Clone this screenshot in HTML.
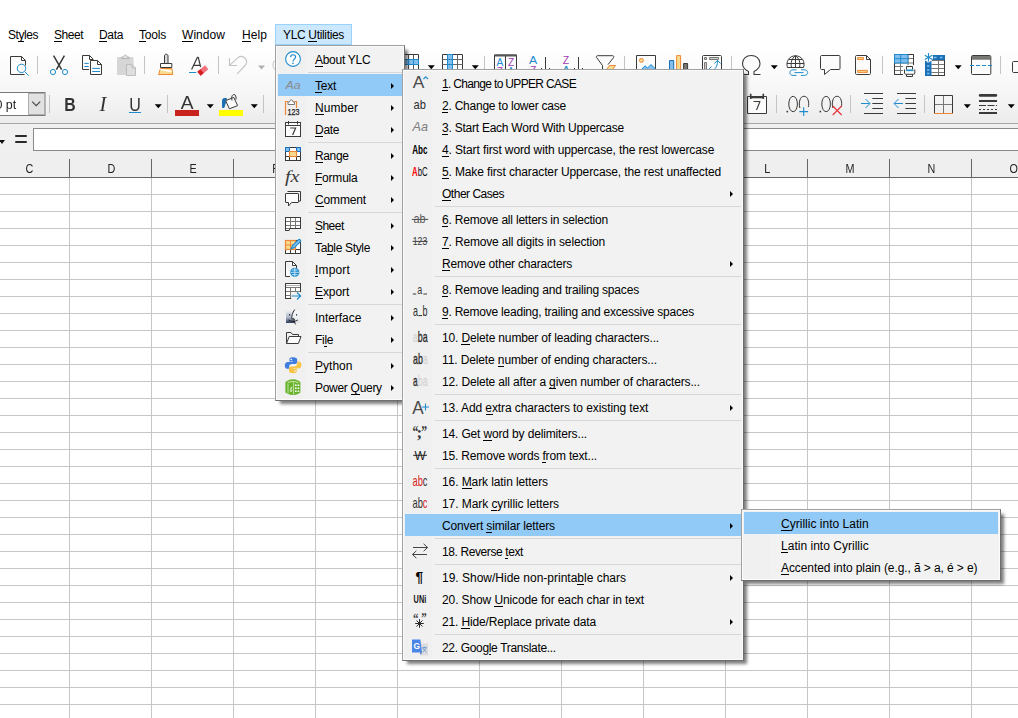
<!DOCTYPE html>
<html lang="en"><head><meta charset="utf-8"><title>YLC Utilities - Text menu</title>
<style>
*{box-sizing:border-box;margin:0;padding:0}
html,body{width:1018px;height:718px;overflow:hidden;background:#fff}
body{font-family:"Liberation Sans",sans-serif;font-size:12px;color:#000;line-height:1}
#app{position:relative;width:1018px;height:718px;overflow:hidden;background:#fff}
.abs{position:absolute}
.ul{position:absolute;height:1px;background:#000}
.mb{position:absolute;top:27px;height:16px;line-height:16px;white-space:nowrap}
.tb{position:absolute;left:0;width:1018px}
.menu{position:absolute;background:#f2f2f2;border:1px solid #a0a0a0;border-right-color:#6e6e6e;border-bottom-color:#6e6e6e;box-shadow:inset 0 0 0 1px #fbfbfb, 4px 4px 3px -1px rgba(0,0,0,.5)}
.mi{position:absolute;height:22px;line-height:22px;white-space:nowrap}
.mi .t{position:absolute;top:1px;height:22px;line-height:22px;white-space:nowrap}
.hl{background:#91c9f7}
.sep{position:absolute;height:1px;background:#d7d7d7}
.gut{position:absolute;left:1px;top:1px;bottom:1px;background:#f0f0f0}
.arr{position:absolute;width:0;height:0;border-left:3.2px solid #000;border-top:3.2px solid transparent;border-bottom:3.2px solid transparent}
.ic{position:absolute;width:16px;height:16px;overflow:visible}
.hdr{filter:grayscale(1);position:absolute;top:152px;height:26px;line-height:35px;padding-left:3px;text-align:center;font-size:12px;color:#222}
.hdr b{display:inline-block;font-weight:normal;transform:scaleX(.9)}
</style></head><body><div id="app">

<div class="tb" style="top:22px;height:25px;background:#fff"></div>
<div class="tb" style="top:44px;height:79px;background:linear-gradient(#fff 0%,#fafafa 40%,#f5f5f5 65%,#ececec 100%)"></div>
<div class="tb" style="top:123px;height:1px;background:#a6a6a6"></div>
<div class="tb" style="top:124px;height:27px;background:#f0f0f0"></div>
<div class="abs" style="left:275px;top:24px;width:77px;height:21px;background:#cce8ff;border:1px solid #99d1ff"></div>
<div class="mb" style="left:8px;letter-spacing:-0.446px">Styles<i class="ul" style="left:10px;top:14px;width:6px"></i></div>
<div class="mb" style="left:54px;letter-spacing:-0.472px">Sheet<i class="ul" style="left:0px;top:14px;width:8px"></i></div>
<div class="mb" style="left:99px;letter-spacing:-0.337px">Data<i class="ul" style="left:0px;top:14px;width:8px"></i></div>
<div class="mb" style="left:139px;letter-spacing:-0.203px">Tools<i class="ul" style="left:0px;top:14px;width:7px"></i></div>
<div class="mb" style="left:182px;letter-spacing:0.053px">Window<i class="ul" style="left:0px;top:14px;width:11px"></i></div>
<div class="mb" style="left:242px;letter-spacing:0.08px">Help<i class="ul" style="left:0px;top:14px;width:9px"></i></div>
<div class="mb" style="left:283px;letter-spacing:-0.335px">YLC Utilities<i class="ul" style="left:25px;top:14px;width:9px"></i></div>
<svg class="abs" style="left:0;top:0" width="1018" height="126" viewBox="0 0 1018 126" font-family="Liberation Sans, sans-serif"><g fill="none" stroke="#3a3a38" stroke-width="1" stroke-linejoin="round" stroke-linecap="butt"><path d="M25.5 65.5V60.5L21.5 56.5H10.5V74.5H24.5" fill="#fcfcfc"/><path d="M21.5 56.5V60.5H25.5"/><circle cx="21.5" cy="68.4" r="4.2" stroke="#1e8bcd" fill="#fbfbfb"/><path d="M24.6 71.6L28.7 75.7" stroke="#1e8bcd"/><path d="M53.6 55.6L61.6 69.6M64.4 55.6L56.4 69.6" stroke-width="1.5"/><circle cx="53" cy="72" r="2.6" stroke="#1e8bcd"/><circle cx="65" cy="72" r="2.6" stroke="#1e8bcd"/><path d="M89 69.5H82.5V55.5H89.5L93 59" fill="#fcfcfc"/><path d="M89.5 55.5V59.5H93.5"/><path d="M90.5 60.5H97.5L101.5 64.5V74.5H90.5Z" fill="#fcfcfc"/><path d="M97.5 60.5V64.5H101.5"/><path d="M84.3 63.4H88.8M84.3 66.5H88.8M92.2 68.4H100M92.2 71.5H100" stroke="#1e8bcd"/><path d="M117.5 57.5H133V74.5H117.5Z" fill="#d6d6d6" stroke="#d6d6d6"/><path d="M121.5 58.5V57H123.5C123.5 54.5 127 54.5 127 57H129V58.5Z" fill="#e6e6e6" stroke="#b4b4b4"/><path d="M126.5 64.5H132L135.5 68V75.5H126.5Z" fill="#dedede" stroke="#bdbdbd"/><path d="M132 64.5V68H135.5" stroke="#bdbdbd"/><path d="M164.5 63V56C164.5 53.6 168 53.6 168 56V63" fill="#d8d8d8"/><path d="M160.5 67.5V63.5H171.8V67.5Z" fill="#fff"/><path d="M160.5 68.5H171.8L172.8 74.5H158.5Z" fill="#f8db8f" stroke="#ed8733"/><path d="M160.3 69.5L171.6 71.5" stroke="#fff" stroke-width="1.6"/><path d="M191.6 69.6L197.3 57.4H198.3L200.6 67M194 65.4H200.2" stroke-width="1.2"/><path d="M189 72.5H196.3" stroke="#1e8bcd" stroke-width="1"/><g transform="rotate(-40 202.8 70.4)" stroke="none"><rect x="197.8" y="67.9" width="10" height="5.2" fill="#f2727c"/><rect x="197.8" y="67.9" width="4" height="5.2" fill="#d21f1f"/></g><path d="M229.5 58V65.5H237M229.8 65.2L238 57.6C242 54.6 247 58 246.6 62.4C246.4 64 245.6 65 244.6 66L237.2 73.8" stroke="#c3c3c3" stroke-width="1.1"/><path d="M273 65C273 62 274 61 275 60.5M273 65C273 67 274 69 275 69.5" stroke="#c3c3c3"/><path d="M403.5 54.5H418.5V70H403.5Z" fill="#fff"/><path d="M408.5 54.5V70M413.5 54.5V70" stroke="#555"/><rect x="403.5" y="59.5" width="15" height="5" fill="#83beec" stroke="#1e8bcd"/><path d="M408.5 59.5V64.5M413.5 59.5V64.5" stroke="#1e8bcd"/><path d="M442.5 54.5H462.5V70H442.5Z" fill="#fff"/><path d="M442.5 59.5H462.5M442.5 64.5H462.5M457.5 54.5V70" stroke="#666"/><rect x="447.5" y="54.5" width="5" height="16" fill="#83beec" stroke="#1e8bcd"/><path d="M447.5 59.5H452.5M447.5 64.5H452.5" stroke="#1e8bcd"/><path d="M494.5 70V55H516.5V70M505.5 56V70"/><path d="M494.5 55.5H516.5" stroke-width="2" stroke="#555"/><path d="M545.5 57V70M578.5 57V70M541.5 68V70M549.5 68V70M574.5 68V70M582.5 68V70"/><path d="M597.6 55.7H612.6C614 55.7 614 57 613.4 57.8L608 64.6M597.6 55.7C596.2 55.7 596.2 57 596.8 57.8L602.5 65.5V70"/><path d="M609.5 65.5H615.5L612.5 69.5H606.5Z" fill="#f8db8f" stroke="#ed8733"/><path d="M636.5 70V55.5H655.5V70" fill="#fcfcfc"/><circle cx="641.4" cy="60.4" r="2" fill="#f8db8f" stroke="#ed8733"/><path d="M641 70L645 65.8L647.5 68L651 64.5L655 68.5V70Z" fill="#83beec" stroke="#1e8bcd"/><rect x="669.5" y="60.5" width="4.2" height="10" fill="#83beec" stroke="#1a6fb5"/><rect x="676.6" y="55.6" width="4" height="15" fill="#f8db8f" stroke="#ed8733"/><rect x="683.6" y="63.5" width="4" height="7" fill="#797774" stroke="#3a3a38"/><path d="M702.5 70V56.5C702.5 55.9 703 55.5 703.5 55.5H720.5C721 55.5 721.5 55.9 721.5 56.5V70" fill="#fcfcfc"/><path d="M704.5 57.5H706.5V59.5H704.5ZM709.5 57.5H718.5V59.5H709.5ZM704.5 62.5H706.5V70H704.5Z" stroke="#797774" fill="#d0d0d0"/><path d="M708 70L711.5 66.5M713.5 70C716.5 68 717.5 65 717.5 60.5M714.5 63.5L717.5 60.3L720.5 63.5" stroke="#1e8bcd"/><path d="M742 74.5H748.5V71.5C744.5 69.5 742.5 66.5 742.5 63.5C742.5 58.5 746.5 55.5 751.2 55.5C756 55.5 760 58.5 760 63.5C760 66.5 758 69.5 754 71.5V74.5H760.5" stroke-width="1.1"/><path d="M787.5 67.5C785.5 62 789 55.8 795.5 55.8C802 55.8 805.5 62 803.5 67.5"/><path d="M787.5 67.5H803.5M787 63.5H804M789 59.5H802M795.5 55.8V67.5M791.5 67.5C790.5 63 791.5 58.5 795.5 55.8M799.5 67.5C800.5 63 799.5 58.5 795.5 55.8"/><path d="M796.5 69.8H793C788.8 69.8 788.8 75.4 793 75.4H796.5M801 69.8H804.5C808.7 69.8 808.7 75.4 804.5 75.4H801M794.5 72.6H803.5" stroke="#1e8bcd"/><path d="M821.5 55.5H839C839.5 55.5 840 56 840 56.5V68.5C840 69 839.5 69.5 839 69.5H830.5L824.5 74.5V69.5H821.5C821 69.5 820.5 69 820.5 68.5V56.5C820.5 56 821 55.5 821.5 55.5Z" fill="#fcfcfc"/><path d="M856.5 55.5H866.5L870.5 59.5V73.5C870.5 74 870 74.5 869.5 74.5H856.5C856 74.5 855.5 74 855.5 73.5V56.5C855.5 56 856 55.5 856.5 55.5Z" fill="#fcfcfc"/><path d="M866.5 55.5V59.5H870.5"/><rect x="857.6" y="57.6" width="5.8" height="2" fill="#f8db8f" stroke="#ed8733"/><rect x="857.6" y="70.4" width="9.8" height="2" fill="#f8db8f" stroke="#ed8733"/><path d="M894.5 54.5H913.5V74.5H894.5Z" fill="#fff"/><path d="M894.5 58.5H913.5M894.5 63H913.5M894.5 66.5H913.5M894.5 70.5H913.5M900.5 54.5V74.5M908 54.5V74.5" stroke="#797774"/><path d="M894.5 54.5H913.5V74.5H894.5Z"/><rect x="894.5" y="54.5" width="13.5" height="8.5" fill="#83beec" stroke="#1e8bcd"/><path d="M894.5 58.7H908M900.7 54.5V63" stroke="#1e8bcd"/><rect x="903" y="65" width="13" height="12" fill="#fafafa" stroke="none"/><path d="M906.5 69.5V66.5H912.5V69.5M904.5 69.5V73C904.5 73.8 905 74.3 906 74.3H913.5C914.3 74.3 914.8 73.8 914.8 73V69.5M906.5 74.5V76.5H912.5V74.5"/><path d="M906 70.3H913.5" stroke="#1e8bcd" stroke-width="1.6"/><path d="M925.5 55.5H944.5V75.5H925.5Z" fill="#fff"/><path d="M931.5 60.5H944.5M931.5 64.5H944.5M931.5 68.5H944.5M931.5 72.5H944.5M938.5 60V75.5" stroke="#797774"/><path d="M944.5 60V75.5H931.5"/><rect x="925" y="55" width="20" height="5" fill="#1a6fb5" stroke="none"/><rect x="925" y="55" width="6.5" height="21" fill="#1a6fb5" stroke="none"/><path d="M934 57.5H936.5M940 57.5H942.5M927 62H929.5M927 66H929.5M927 70H929.5M927 73.5H929.5" stroke="#83beec" stroke-width="1.6"/><circle cx="928.5" cy="57.3" r="4.6" fill="#fcfcfc" stroke="none"/><path d="M928.5 53V61.6M924.8 55.2L932.2 59.4M924.8 59.4L932.2 55.2" stroke="#1e8bcd" stroke-width="1.1"/><path d="M972.5 55.5H989.8C990.4 55.5 990.8 56 990.8 56.5V73.5C990.8 74 990.4 74.5 989.8 74.5H972.5C972 74.5 971.5 74 971.5 73.5V56.5C971.5 56 972 55.5 972.5 55.5Z" fill="#fcfcfc"/><rect x="972" y="56" width="18.4" height="2.6" fill="#797774" stroke="none"/><path d="M971.5 59H990.8"/><path d="M970 65.5H992" stroke="#1e8bcd" stroke-dasharray="4 2" stroke-width="1" /><path d="M1018 61.5H1013.5C1012.9 61.5 1012.5 62 1012.5 62.5V71.5C1012.5 72 1012.9 72.5 1013.5 72.5H1018" fill="#fcfcfc"/><path d="M747.5 96.5H766.5V113.5H747.5Z" fill="#fcfcfc"/><path d="M750.7 93.8V99M763.3 93.8V99" stroke-width="1.6"/><path d="M751 97.2H763" stroke-width="2.2"/><path d="M753.5 101.5H760L756.5 110" stroke-width="1.1"/><rect x="786.5" y="110.8" width="1.6" height="1.6" fill="#3a3a38" stroke="none"/><ellipse cx="793.1" cy="104" rx="4.3" ry="7.7"/><path d="M799.9 108C799.1 105 799.1 103 799.9 100C801.1 95 806.9 95 808.1 100C808.9 103 808.9 105 808.3 107"/><path d="M803.7 107.2V116M799.3 111.6H808.1" stroke="#1e8bcd" stroke-width="1.1"/><rect x="819.5" y="110.8" width="1.6" height="1.6" fill="#3a3a38" stroke="none"/><ellipse cx="826.1" cy="104" rx="4.3" ry="7.7"/><path d="M832.9 108C832.1 105 832.1 103 832.9 100C834.1 95 839.9 95 841.1 100C841.9 103 841.9 105 841.3 107"/><path d="M832.7 106L841.7 115M841.7 106L832.7 115" stroke="#e8303a" stroke-width="1.1"/><path d="M864 93.5H883M872.3 98.5H883M872.3 103.5H883M872.3 108.5H883M864 113.5H883"/><path d="M861 103.5H869.5M865.5 99L870 103.5L865.5 108" stroke="#1e8bcd" stroke-linejoin="miter"/><path d="M897 93.5H916M905.4 98.5H916M905.4 103.5H916M905.4 108.5H916M897 113.5H916"/><path d="M894.5 103.5H903M898.5 99L894 103.5L898.5 108" stroke="#1e8bcd" stroke-linejoin="miter"/><path d="M943.5 96V113M935 104.5H952.5" stroke="#797774"/><path d="M934.5 113.5V95.5H952.5V113.5"/><path d="M934 113.5H953" stroke="#ed8733"/><path d="M980.2 95.4H995.8" stroke-width="2.8" stroke-linecap="round"/><path d="M979 101H997M979 113H997" stroke-width="2"/><path d="M979 105.5H997" stroke-dasharray="7 1.5"/><path d="M979 109.5H997" stroke-dasharray="2 2"/><path d="M222.5 107.5V100.5C222.5 98.5 224 98.2 226.5 98.6L224 107.5Z" fill="#1a6fb5" stroke="#1a6fb5"/><path d="M225.6 100.6L233.8 97.4L237.6 105.6L229.4 108.8Z" fill="#fcfcfc"/><path d="M232 100.5C231 96.5 232.5 94.5 234 94.5C235.5 94.5 236.3 96.5 236 99.5" stroke-width="1"/></g><rect x="37.0" y="56" width="1" height="18" fill="#c4c4c4"/><rect x="144.0" y="56" width="1" height="18" fill="#c4c4c4"/><rect x="218.0" y="56" width="1" height="18" fill="#c4c4c4"/><rect x="484.0" y="56" width="1" height="14" fill="#c4c4c4"/><rect x="624.0" y="56" width="1" height="14" fill="#c4c4c4"/><rect x="731.0" y="56" width="1" height="14" fill="#c4c4c4"/><rect x="882.0" y="56" width="1" height="18" fill="#c4c4c4"/><rect x="1000.0" y="56" width="1" height="18" fill="#c4c4c4"/><rect x="49.0" y="95" width="1" height="18" fill="#c4c4c4"/><rect x="167.0" y="95" width="1" height="18" fill="#c4c4c4"/><rect x="263.0" y="95" width="1" height="18" fill="#c4c4c4"/><rect x="776.0" y="95" width="1" height="18" fill="#c4c4c4"/><rect x="850.0" y="95" width="1" height="18" fill="#c4c4c4"/><rect x="924.0" y="95" width="1" height="18" fill="#c4c4c4"/><path d="M258 65.4h7l-3.5 4z" fill="#b0b0b0"/><path d="M427.8 65.3h7l-3.3 3.7h-0.4z" fill="#000"/><path d="M471.8 65.3h7l-3.3 3.7h-0.4z" fill="#000"/><path d="M770.8 65.3h7l-3.5 4z" fill="#000"/><path d="M954.7 65.3h7l-3.5 4z" fill="#000"/><path d="M154.8 104.3h7l-3.5 4z" fill="#000"/><path d="M206.8 104.3h7l-3.5 4z" fill="#000"/><path d="M250.8 104.3h7l-3.5 4z" fill="#000"/><path d="M963.8 104.3h7l-3.5 4z" fill="#000"/><path d="M1007.8 104.3h7l-3.5 4z" fill="#000"/><rect x="175" y="110" width="24" height="6" fill="#c9211e"/><rect x="219" y="110" width="24" height="6" fill="#ffff00"/><rect x="-10" y="92.5" width="55" height="23" fill="#fff" stroke="#7a7a7a"/><rect x="28.5" y="93.5" width="16" height="21" fill="#e1e1e1" stroke="#adadad"/><path d="M32.2 101.6L36.2 105.6L40.2 101.6" fill="none" stroke="#444" stroke-width="1.1"/><g style="filter:grayscale(1)"><text x="-4.6" y="108.6" font-size="12" fill="#222" textLength="20.8" lengthAdjust="spacingAndGlyphs">0 pt</text><text x="64.3" y="110.9" font-size="18.6" font-weight="bold" fill="#333" textLength="11.4" lengthAdjust="spacingAndGlyphs">B</text><text x="99.6" y="110.9" font-size="20.6" font-style="italic" font-family="Liberation Serif, serif" fill="#333">I</text><text x="129.2" y="110.8" font-size="18.6" fill="#333" textLength="11.6" lengthAdjust="spacingAndGlyphs">U</text><text x="180.7" y="109" font-size="18.6" fill="#333" textLength="12.8" lengthAdjust="spacingAndGlyphs">A</text></g><rect x="129" y="112" width="12" height="1" fill="#1e8bcd"/><g font-size="10.5" font-weight="normal"><text x="496.6" y="65.7" fill="#1e8bcd" textLength="6.8" lengthAdjust="spacingAndGlyphs">A</text><text x="508" y="65.7" fill="#a33bb5" textLength="6.2" lengthAdjust="spacingAndGlyphs">Z</text><text x="496.8" y="74.6" fill="#a33bb5" textLength="6.2" lengthAdjust="spacingAndGlyphs">Z</text><text x="507.6" y="74.6" fill="#1e8bcd" textLength="6.8" lengthAdjust="spacingAndGlyphs">A</text></g><g font-size="11.6"><text x="529" y="63.9" fill="#1e8bcd" textLength="8.2" lengthAdjust="spacingAndGlyphs">A</text><text x="530" y="74.4" fill="#a33bb5" textLength="6.4" lengthAdjust="spacingAndGlyphs">Z</text><text x="562.8" y="63.9" fill="#a33bb5" textLength="6.4" lengthAdjust="spacingAndGlyphs">Z</text><text x="562" y="74.4" fill="#1e8bcd" textLength="8.2" lengthAdjust="spacingAndGlyphs">A</text></g></svg>
<div class="abs" style="left:33px;top:128px;width:990px;height:23px;background:#fff;border:1px solid #8a8a8a"></div>
<div class="abs" style="left:15px;top:135px;width:12px;height:2px;background:#2a2a2a;border-radius:1px"></div>
<div class="abs" style="left:15px;top:141px;width:12px;height:2px;background:#2a2a2a;border-radius:1px"></div>
<div class="abs" style="left:-1.2px;top:139.5px;width:0;height:0;border-top:4px solid #111;border-left:3.6px solid transparent;border-right:3.6px solid transparent"></div>
<div class="abs" style="left:0;top:151px;width:1018px;height:26px;background:#efefef"></div>
<div class="abs" style="left:0;top:177px;width:1018px;height:1px;background:#666"></div>
<div class="hdr" style="left:-13px;width:82px"><b>C</b></div>
<div class="abs" style="left:69px;top:159px;width:1px;height:19px;background:#666"></div>
<div class="hdr" style="left:69px;width:82px"><b>D</b></div>
<div class="abs" style="left:151px;top:159px;width:1px;height:19px;background:#666"></div>
<div class="hdr" style="left:151px;width:82px"><b>E</b></div>
<div class="abs" style="left:233px;top:159px;width:1px;height:19px;background:#666"></div>
<div class="hdr" style="left:233px;width:82px"><b>F</b></div>
<div class="abs" style="left:315px;top:159px;width:1px;height:19px;background:#666"></div>
<div class="hdr" style="left:315px;width:82px"><b>G</b></div>
<div class="abs" style="left:397px;top:159px;width:1px;height:19px;background:#666"></div>
<div class="hdr" style="left:397px;width:82px"><b>H</b></div>
<div class="abs" style="left:479px;top:159px;width:1px;height:19px;background:#666"></div>
<div class="hdr" style="left:479px;width:82px"><b>I</b></div>
<div class="abs" style="left:561px;top:159px;width:1px;height:19px;background:#666"></div>
<div class="hdr" style="left:561px;width:82px"><b>J</b></div>
<div class="abs" style="left:643px;top:159px;width:1px;height:19px;background:#666"></div>
<div class="hdr" style="left:643px;width:82px"><b>K</b></div>
<div class="abs" style="left:725px;top:159px;width:1px;height:19px;background:#666"></div>
<div class="hdr" style="left:725px;width:82px"><b>L</b></div>
<div class="abs" style="left:807px;top:159px;width:1px;height:19px;background:#666"></div>
<div class="hdr" style="left:807px;width:82px"><b>M</b></div>
<div class="abs" style="left:889px;top:159px;width:1px;height:19px;background:#666"></div>
<div class="hdr" style="left:889px;width:82px"><b>N</b></div>
<div class="abs" style="left:971px;top:159px;width:1px;height:19px;background:#666"></div>
<div class="hdr" style="left:971px;width:82px"><b>O</b></div>
<div class="abs" style="left:1053px;top:159px;width:1px;height:19px;background:#666"></div>
<div class="abs" style="left:0;top:178px;width:1018px;height:540px;background:repeating-linear-gradient(to right,transparent 0,transparent 69px,#c6c6c6 69px,#c6c6c6 70px,transparent 70px,transparent 82px),repeating-linear-gradient(to bottom,transparent 0,transparent 16px,#c6c6c6 16px,#c6c6c6 17px)"></div>
<div class="menu" style="left:275px;top:45px;width:130px;height:356px">
<div class="gut" style="width:28px"></div>
<div class="mi" style="left:2px;top:2px;width:124px">
<svg class="ic" style="left:7px;top:3px" width="16" height="16" viewBox="0 0 16 16" font-family="Liberation Sans, sans-serif" ><circle cx="8" cy="8" r="7.4" fill="#fff" stroke="#1e8bcd" stroke-width="1.1"/><path d="M5.6 6.2C5.6 3 10.6 3 10.6 6C10.6 8 8 8.2 8 10.4" fill="none" stroke="#1e8bcd" stroke-width="1.2"/><rect x="7.3" y="11.6" width="1.4" height="1.4" fill="#1e8bcd"/></svg>
<span class="t" style="left:37px;letter-spacing:-0.282px">About YLC<i class="ul" style="left:0px;top:17px;width:8px"></i></span>
</div>
<div class="sep" style="left:32px;top:26px;width:94px"></div>
<div class="mi hl" style="left:2px;top:28px;width:124px">
<svg class="ic" style="left:7px;top:3px" width="16" height="16" viewBox="0 0 16 16" font-family="Liberation Sans, sans-serif" ><text x="0.4" y="12.2" font-size="11.6" font-style="italic" fill="#8c8c8c" textLength="15.2" lengthAdjust="spacingAndGlyphs">Aa</text></svg>
<span class="t" style="left:37px;letter-spacing:-0.252px">Text<i class="ul" style="left:0px;top:17px;width:7px"></i></span>
<i class="arr" style="left:113px;top:8.8px"></i>
</div>
<div class="mi" style="left:2px;top:50px;width:124px">
<svg class="ic" style="left:7px;top:3px" width="16" height="16" viewBox="0 0 16 16" font-family="Liberation Sans, sans-serif" ><path d="M3 2.5H0.5V16M9.5 2.5H11.5V9" fill="none" stroke="#ed8733" stroke-width="1.2"/><path d="M3 5.5V3H4.5C4.5 0.2 8 0.2 8 3H9.5V5.5Z" fill="#fff" stroke="#797774"/><text x="2.4" y="16" font-size="8.8" fill="#222" stroke="#222" stroke-width="0.25" textLength="12" lengthAdjust="spacingAndGlyphs">123</text></svg>
<span class="t" style="left:37px;letter-spacing:0.053px">Number<i class="ul" style="left:0px;top:17px;width:9px"></i></span>
<i class="arr" style="left:113px;top:8.8px"></i>
</div>
<div class="mi" style="left:2px;top:72px;width:124px">
<svg class="ic" style="left:7px;top:3px" width="16" height="16" viewBox="0 0 16 16" font-family="Liberation Sans, sans-serif" ><rect x="0.5" y="1.5" width="15" height="14" fill="#fcfcfc" stroke="#3a3a38"/><path d="M0.5 4.5H15.5M3.5 0V3.5M12.5 0V3.5" stroke="#3a3a38" fill="none"/><path d="M5.2 7H10.6L7.6 14" stroke="#3a3a38" fill="none" stroke-width="1.2"/></svg>
<span class="t" style="left:37px;letter-spacing:-0.287px">Date<i class="ul" style="left:0px;top:17px;width:8px"></i></span>
<i class="arr" style="left:113px;top:8.8px"></i>
</div>
<div class="sep" style="left:32px;top:96px;width:94px"></div>
<div class="mi" style="left:2px;top:98px;width:124px">
<svg class="ic" style="left:7px;top:3px" width="16" height="16" viewBox="0 0 16 16" font-family="Liberation Sans, sans-serif" ><rect x="0.5" y="0.5" width="15" height="13" fill="#fff" stroke="#3a3a38"/><path d="M0.5 4.5H15.5M0.5 9.5H15.5M4.5 0.5V13.5M11.5 0.5V13.5" stroke="#3a3a38" fill="none"/><rect x="0.5" y="0.5" width="4" height="4" fill="#83beec" stroke="#1a6fb5"/><rect x="11.5" y="0.5" width="4" height="4" fill="#83beec" stroke="#1a6fb5"/><rect x="4.5" y="4.5" width="7" height="5" fill="#f8db8f" stroke="#ed8733" stroke-width="1.1"/></svg>
<span class="t" style="left:37px;letter-spacing:-0.372px">Range<i class="ul" style="left:0px;top:17px;width:8px"></i></span>
<i class="arr" style="left:113px;top:8.8px"></i>
</div>
<div class="mi" style="left:2px;top:120px;width:124px">
<svg class="ic" style="left:7px;top:3px" width="16" height="16" viewBox="0 0 16 16" font-family="Liberation Sans, sans-serif" ><text x="0" y="12.6" font-size="16.5" font-style="italic" font-family="Liberation Serif, serif" fill="#3a3a38" textLength="14.6" lengthAdjust="spacingAndGlyphs">fx</text></svg>
<span class="t" style="left:37px;letter-spacing:-0.216px">Formula<i class="ul" style="left:0px;top:17px;width:7px"></i></span>
<i class="arr" style="left:113px;top:8.8px"></i>
</div>
<div class="mi" style="left:2px;top:142px;width:124px">
<svg class="ic" style="left:7px;top:3px" width="16" height="16" viewBox="0 0 16 16" font-family="Liberation Sans, sans-serif" ><path d="M2.5 0.5H15.5V10H14" fill="none" stroke="#3a3a38"/><path d="M1 2.5H13C13.3 2.5 13.5 2.7 13.5 3V11C13.5 11.3 13.3 11.5 13 11.5H6.5L3.5 15V11.5H1C0.7 11.5 0.5 11.3 0.5 11V3C0.5 2.7 0.7 2.5 1 2.5Z" fill="#fcfcfc" stroke="#3a3a38"/></svg>
<span class="t" style="left:37px;letter-spacing:-0.145px">Comment<i class="ul" style="left:0px;top:17px;width:9px"></i></span>
<i class="arr" style="left:113px;top:8.8px"></i>
</div>
<div class="sep" style="left:32px;top:166px;width:94px"></div>
<div class="mi" style="left:2px;top:168px;width:124px">
<svg class="ic" style="left:7px;top:3px" width="16" height="16" viewBox="0 0 16 16" font-family="Liberation Sans, sans-serif" ><path d="M0.5 0.5H15.5V11.5H5L4 13.5H0.5Z" fill="#fff" stroke="#3a3a38"/><path d="M0.5 4.5H15.5M0.5 8.5H15.5M0.5 11.5H5M5.5 0.5V11.5M10.5 0.5V11.5" stroke="#797774" fill="none"/><path d="M0.5 0.5H15.5V11.5H5L4 13.5H0.5Z" fill="none" stroke="#3a3a38"/></svg>
<span class="t" style="left:37px;letter-spacing:-0.532px">Sheet<i class="ul" style="left:0px;top:17px;width:7px"></i></span>
<i class="arr" style="left:113px;top:8.8px"></i>
</div>
<div class="mi" style="left:2px;top:190px;width:124px">
<svg class="ic" style="left:7px;top:3px" width="16" height="16" viewBox="0 0 16 16" font-family="Liberation Sans, sans-serif" ><rect x="0.5" y="1.5" width="15" height="13" fill="#fff" stroke="#3a3a38"/><path d="M0.5 10.5H15.5M5.5 10.5V14.5M10.5 10.5V14.5" stroke="#3a3a38" fill="none"/><rect x="0.5" y="1.5" width="10" height="9" fill="#f8db8f" stroke="#ed8733" stroke-width="1.2"/><path d="M0.5 6H10.5M5.5 1.5V10.5" stroke="#ed8733" fill="none"/><path d="M6 10L7.5 6.5L13.5 0.6C14.5 -0.2 16.4 1.6 15.4 2.6L9.5 8.6Z" fill="#83beec" stroke="#1e8bcd" stroke-width="1.1"/></svg>
<span class="t" style="left:37px;letter-spacing:-0.336px">Table Style<i class="ul" style="left:12px;top:17px;width:6px"></i></span>
<i class="arr" style="left:113px;top:8.8px"></i>
</div>
<div class="mi" style="left:2px;top:212px;width:124px">
<svg class="ic" style="left:7px;top:3px" width="16" height="16" viewBox="0 0 16 16" font-family="Liberation Sans, sans-serif" ><path d="M0.5 0.5H7.5L11.5 4.5V7M5 15.5H0.5V0.5" fill="#fcfcfc" stroke="#3a3a38"/><path d="M7.5 0.5V4.5H11.5" fill="none" stroke="#3a3a38"/><circle cx="9.8" cy="11.3" r="4.6" fill="#1e8bcd"/><path d="M5.6 11.3H14M7 9H12.6M7 13.6H12.6M9.8 6.8V15.8" stroke="#cfe6f7" stroke-width="0.9" fill="none"/></svg>
<span class="t" style="left:37px;letter-spacing:0.165px">Import<i class="ul" style="left:0px;top:17px;width:3px"></i></span>
<i class="arr" style="left:113px;top:8.8px"></i>
</div>
<div class="mi" style="left:2px;top:234px;width:124px">
<svg class="ic" style="left:7px;top:3px" width="16" height="16" viewBox="0 0 16 16" font-family="Liberation Sans, sans-serif" ><rect x="0.5" y="0.5" width="15" height="15" fill="#fff" stroke="#3a3a38"/><path d="M1 2.5H15" stroke="#b0b0b0" stroke-width="1"/><path d="M0.5 4.5H15.5M0.5 8.5H15.5M0.5 12.5H6M5.5 4.5V15.5M10.5 4.5V8.5" stroke="#797774" fill="none"/><rect x="6.2" y="9.2" width="10.5" height="7.2" fill="#f0f0f0"/><path d="M6 15.5H0.5V0.5H15.5V9" fill="none" stroke="#3a3a38"/><path d="M6.5 13H15.5M12 9.5L15.6 13L12 16.5" fill="none" stroke="#1e8bcd" stroke-width="1.2"/></svg>
<span class="t" style="left:37px;letter-spacing:-0.08px">Export<i class="ul" style="left:0px;top:17px;width:8px"></i></span>
<i class="arr" style="left:113px;top:8.8px"></i>
</div>
<div class="sep" style="left:32px;top:258px;width:94px"></div>
<div class="mi" style="left:2px;top:260px;width:124px">
<svg class="ic" style="left:7px;top:3px" width="16" height="16" viewBox="0 0 16 16" font-family="Liberation Sans, sans-serif" ><defs><linearGradient id="fg" x1="0" y1="0" x2="0" y2="1"><stop offset="0" stop-color="#e8ecf2"/><stop offset="0.55" stop-color="#aab4c4"/><stop offset="1" stop-color="#2a3a5a"/></linearGradient></defs><rect x="1" y="2" width="14" height="12" fill="url(#fg)"/><path d="M8.8 2C7 5 6.4 7.6 6.6 10H9C9 12 9.4 13 10 14H15V2Z" fill="#f4f6f8" opacity="0.9"/><path d="M9.6 0.6C7.4 4 6.6 7 6.8 9.8H9.2C9.2 12.4 9.8 14 10.6 15.4" fill="none" stroke="#1a1a1a" stroke-width="0.9"/><path d="M3.6 11C6 12.8 10.4 12.8 12.8 11" fill="none" stroke="#1a1a1a" stroke-width="0.9"/><path d="M4.6 5V6.6M11.6 5V6.6" stroke="#1a1a1a" stroke-width="0.9"/></svg>
<span class="t" style="left:37px;letter-spacing:-0.044px">Interface</span>
<i class="arr" style="left:113px;top:8.8px"></i>
</div>
<div class="mi" style="left:2px;top:282px;width:124px">
<svg class="ic" style="left:7px;top:3px" width="16" height="16" viewBox="0 0 16 16" font-family="Liberation Sans, sans-serif" ><path d="M1.5 12.5V1.5H6L7.5 3.5H13.5V5.5" fill="none" stroke="#3a3a38"/><path d="M1.5 12.5L4.2 5.5H16L13.4 12.5Z" fill="#fcfcfc" stroke="#3a3a38"/></svg>
<span class="t" style="left:37px;letter-spacing:-0.284px">File<i class="ul" style="left:9px;top:17px;width:3px"></i></span>
<i class="arr" style="left:113px;top:8.8px"></i>
</div>
<div class="sep" style="left:32px;top:306px;width:94px"></div>
<div class="mi" style="left:2px;top:308px;width:124px">
<svg class="ic" style="left:7px;top:3px" width="16" height="16" viewBox="0 0 16 16" font-family="Liberation Sans, sans-serif" ><path d="M7.8 0.2C4.6 0.2 4.4 1.6 4.4 2.6V4.4H8V5H2.8C1 5 -0.2 6.4 -0.2 8.4C-0.2 10.6 1 11.8 2.6 11.8H4.2V9.6C4.2 8.2 5.2 7 6.8 7H10.2C11.4 7 12.2 6.2 12.2 5V2.6C12.2 1.2 11 0.2 7.8 0.2Z" fill="#3f7ee0"/><path d="M8.4 16.2C11.6 16.2 11.8 14.8 11.8 13.8V12H8.2V11.4H13.4C15.2 11.4 16.4 10 16.4 8C16.4 5.8 15.2 4.6 13.6 4.6H12.2V6.8C12.2 8.2 11 9.4 9.4 9.4H6C4.8 9.4 4 10.2 4 11.4V13.8C4 15.2 5.2 16.2 8.4 16.2Z" fill="#f8c444"/><circle cx="6.2" cy="2.4" r="0.8" fill="#fff"/><circle cx="10" cy="14" r="0.8" fill="#fff"/></svg>
<span class="t" style="left:37px;letter-spacing:0.023px">Python<i class="ul" style="left:0px;top:17px;width:8px"></i></span>
<i class="arr" style="left:113px;top:8.8px"></i>
</div>
<div class="mi" style="left:2px;top:330px;width:124px">
<svg class="ic" style="left:7px;top:3px" width="16" height="16" viewBox="0 0 16 16" font-family="Liberation Sans, sans-serif" ><path d="M3 1.4C6 -0.2 10 -0.2 13 1.4L15.4 3V13.4L13 15C10 16.4 6 16.4 3 15L0.4 13.4V3Z" fill="#68b22c"/><path d="M2.6 3.6C5.8 2.2 10.2 2.2 13.4 3.6" fill="none" stroke="#d8f0c0" stroke-width="0.9"/><path d="M3 4.6V14.6M8.6 3.6V15.4" stroke="#d8f0c0" stroke-width="0.8" fill="none"/><path d="M10 5.4H11.6V7H10ZM12.6 5.4H14.2V7H12.6ZM10 8.4H11.6V10H10ZM12.6 8.4H14.2V10H12.6ZM10 11.4H11.6V13H10ZM12.6 11.4H14.2V13H12.6Z" fill="#fff"/><path d="M5 11.6L6 12.6L7 11.6M6 12.4V8.6H7.2" fill="none" stroke="#fff" stroke-width="0.9"/></svg>
<span class="t" style="left:37px;letter-spacing:-0.293px">Power Query<i class="ul" style="left:36px;top:17px;width:9px"></i></span>
<i class="arr" style="left:113px;top:8.8px"></i>
</div>
</div>
<div class="menu" style="left:402px;top:69px;width:342px;height:592px">
<div class="gut" style="width:28px"></div>
<div class="mi" style="left:2px;top:2px;width:336px">
<svg class="ic" style="left:6px;top:3px" width="16" height="16" viewBox="0 0 16 16" font-family="Liberation Sans, sans-serif" ><text x="1.8" y="13.2" font-size="17.4" fill="#4a4a4a" textLength="11.6" lengthAdjust="spacingAndGlyphs" >A</text><path d="M12.4 4.2L14.7 1.8L17 4.2" fill="none" stroke="#1e8bcd" stroke-width="1.2"/></svg>
<span class="t" style="left:37px;letter-spacing:-0.67px">1. Change to UPPER CASE<i class="ul" style="left:0px;top:17px;width:6px"></i></span>
</div>
<div class="mi" style="left:2px;top:24px;width:336px">
<svg class="ic" style="left:6px;top:3px" width="16" height="16" viewBox="0 0 16 16" font-family="Liberation Sans, sans-serif" ><text x="2.6" y="11.5" font-size="12.6" fill="#2e2e2e" textLength="12.4" lengthAdjust="spacingAndGlyphs" >ab</text></svg>
<span class="t" style="left:37px;letter-spacing:-0.235px">2. Change to lower case<i class="ul" style="left:0px;top:17px;width:6px"></i></span>
</div>
<div class="mi" style="left:2px;top:46px;width:336px">
<svg class="ic" style="left:6px;top:3px" width="16" height="16" viewBox="0 0 16 16" font-family="Liberation Sans, sans-serif" ><text x="1.6" y="12" font-size="12.8" fill="#7c7c7c" textLength="15.4" lengthAdjust="spacingAndGlyphs" font-style="italic">Aa</text></svg>
<span class="t" style="left:37px;letter-spacing:-0.238px">3. Start Each Word With Uppercase<i class="ul" style="left:0px;top:17px;width:6px"></i></span>
</div>
<div class="mi" style="left:2px;top:68px;width:336px">
<svg class="ic" style="left:6px;top:3px" width="16" height="16" viewBox="0 0 16 16" font-family="Liberation Sans, sans-serif" ><text x="1.2" y="12.6" font-size="12.8" fill="#000" textLength="15.2" lengthAdjust="spacingAndGlyphs" font-weight="bold">Abc</text></svg>
<span class="t" style="left:37px;letter-spacing:-0.122px">4. Start first word with uppercase, the rest lowercase<i class="ul" style="left:0px;top:17px;width:7px"></i></span>
</div>
<div class="mi" style="left:2px;top:90px;width:336px">
<svg class="ic" style="left:6px;top:3px" width="16" height="16" viewBox="0 0 16 16" font-family="Liberation Sans, sans-serif" ><text x="1" y="13" font-size="12.6" textLength="15.6" lengthAdjust="spacingAndGlyphs"><tspan fill="#f00" font-weight="bold">A</tspan><tspan fill="#111">bC</tspan></text></svg>
<span class="t" style="left:37px;letter-spacing:-0.128px">5. Make first character Uppercase, the rest unaffected<i class="ul" style="left:0px;top:17px;width:7px"></i></span>
</div>
<div class="mi" style="left:2px;top:112px;width:336px">
<span class="t" style="left:37px;letter-spacing:-0.487px">Other Cases<i class="ul" style="left:0px;top:17px;width:9px"></i></span>
<i class="arr" style="left:325px;top:8.8px"></i>
</div>
<div class="sep" style="left:32px;top:136px;width:306px"></div>
<div class="mi" style="left:2px;top:138px;width:336px">
<svg class="ic" style="left:6px;top:3px" width="16" height="16" viewBox="0 0 16 16" font-family="Liberation Sans, sans-serif" ><text x="2.6" y="12" font-size="12.4" fill="#5a5a5a" textLength="12" lengthAdjust="spacingAndGlyphs" >ab</text><path d="M0.8 8.4H17.2" stroke="#4a4a4a" stroke-width="1"/></svg>
<span class="t" style="left:37px;letter-spacing:-0.198px">6. Remove all letters in selection<i class="ul" style="left:0px;top:17px;width:6px"></i></span>
</div>
<div class="mi" style="left:2px;top:160px;width:336px">
<svg class="ic" style="left:6px;top:3px" width="16" height="16" viewBox="0 0 16 16" font-family="Liberation Sans, sans-serif" ><text x="1.8" y="12" font-size="10.8" fill="#3a3a3a" textLength="14.4" lengthAdjust="spacingAndGlyphs" >123</text><path d="M1.6 8.4H16.6" stroke="#3a3a3a" stroke-width="1"/></svg>
<span class="t" style="left:37px;letter-spacing:-0.154px">7. Remove all digits in selection<i class="ul" style="left:0px;top:17px;width:7px"></i></span>
</div>
<div class="mi" style="left:2px;top:182px;width:336px">
<span class="t" style="left:37px;letter-spacing:-0.205px">Remove other characters<i class="ul" style="left:0px;top:17px;width:8px"></i></span>
<i class="arr" style="left:325px;top:8.8px"></i>
</div>
<div class="sep" style="left:32px;top:206px;width:306px"></div>
<div class="mi" style="left:2px;top:208px;width:336px">
<svg class="ic" style="left:6px;top:3px" width="16" height="16" viewBox="0 0 16 16" font-family="Liberation Sans, sans-serif" ><text x="6.2" y="13.2" font-size="13.6" fill="#3a3a3a" textLength="5" lengthAdjust="spacingAndGlyphs" >a</text><path d="M1.8 13H5.2M12.4 13H16" stroke="#3a3a3a" stroke-width="1"/></svg>
<span class="t" style="left:37px;letter-spacing:-0.174px">8. Remove leading and trailing spaces<i class="ul" style="left:0px;top:17px;width:6px"></i></span>
</div>
<div class="mi" style="left:2px;top:230px;width:336px">
<svg class="ic" style="left:6px;top:3px" width="16" height="16" viewBox="0 0 16 16" font-family="Liberation Sans, sans-serif" ><text x="2" y="13" font-size="14.6" fill="#2e2e2e" textLength="5" lengthAdjust="spacingAndGlyphs" >a</text><text x="11.4" y="13" font-size="14.6" fill="#2e2e2e" textLength="5" lengthAdjust="spacingAndGlyphs" >b</text><path d="M7.4 12.6H11" stroke="#2e2e2e" stroke-width="1"/></svg>
<span class="t" style="left:37px;letter-spacing:-0.225px">9. Remove leading, trailing and excessive spaces<i class="ul" style="left:0px;top:17px;width:6px"></i></span>
</div>
<div class="sep" style="left:32px;top:254px;width:306px"></div>
<div class="mi" style="left:2px;top:256px;width:336px">
<svg class="ic" style="left:6px;top:3px" width="16" height="16" viewBox="0 0 16 16" font-family="Liberation Sans, sans-serif" ><text x="2" y="13" font-size="15" fill="#d6d6d6" textLength="4.6" lengthAdjust="spacingAndGlyphs" stroke="#d6d6d6" stroke-width="0.35">a</text><text x="6.8" y="13" font-size="15" fill="#2e2e2e" textLength="9.8" lengthAdjust="spacingAndGlyphs" stroke="#2e2e2e" stroke-width="0.35">ba</text></svg>
<span class="t" style="left:37px;letter-spacing:-0.154px">10. Delete number of leading characters...<i class="ul" style="left:19px;top:17px;width:9px"></i></span>
</div>
<div class="mi" style="left:2px;top:278px;width:336px">
<svg class="ic" style="left:6px;top:3px" width="16" height="16" viewBox="0 0 16 16" font-family="Liberation Sans, sans-serif" ><text x="2" y="13" font-size="15" fill="#2e2e2e" textLength="9.8" lengthAdjust="spacingAndGlyphs" stroke="#2e2e2e" stroke-width="0.35">ab</text><text x="12" y="13" font-size="15" fill="#d6d6d6" textLength="4.6" lengthAdjust="spacingAndGlyphs" stroke="#d6d6d6" stroke-width="0.35">a</text></svg>
<span class="t" style="left:37px;letter-spacing:-0.12px">11. Delete number of ending characters...<i class="ul" style="left:56px;top:17px;width:6px"></i></span>
</div>
<div class="mi" style="left:2px;top:300px;width:336px">
<svg class="ic" style="left:6px;top:3px" width="16" height="16" viewBox="0 0 16 16" font-family="Liberation Sans, sans-serif" ><text x="2" y="13" font-size="15" fill="#2e2e2e" textLength="4.6" lengthAdjust="spacingAndGlyphs" stroke="#2e2e2e" stroke-width="0.35">a</text><text x="6.8" y="13" font-size="15" fill="#d6d6d6" textLength="9.8" lengthAdjust="spacingAndGlyphs" stroke="#d6d6d6" stroke-width="0.35">ba</text></svg>
<span class="t" style="left:37px;letter-spacing:-0.157px">12. Delete all after a given number of characters...<i class="ul" style="left:107px;top:17px;width:7px"></i></span>
</div>
<div class="sep" style="left:32px;top:324px;width:306px"></div>
<div class="mi" style="left:2px;top:326px;width:336px">
<svg class="ic" style="left:6px;top:3px" width="16" height="16" viewBox="0 0 16 16" font-family="Liberation Sans, sans-serif" ><text x="1.2" y="15" font-size="18" fill="#4a4a4a" textLength="11.4" lengthAdjust="spacingAndGlyphs" >A</text><path d="M14.5 4.5V11.5M11 8H18" stroke="#1e8bcd" stroke-width="1.1" fill="none"/></svg>
<span class="t" style="left:37px;letter-spacing:-0.092px">13. Add extra characters to existing text<i class="ul" style="left:44px;top:17px;width:7px"></i></span>
<i class="arr" style="left:325px;top:8.8px"></i>
</div>
<div class="sep" style="left:32px;top:350px;width:306px"></div>
<div class="mi" style="left:2px;top:352px;width:336px">
<svg class="ic" style="left:6px;top:3px" width="16" height="16" viewBox="0 0 16 16" font-family="Liberation Sans, sans-serif" ><text x="1.4" y="12.4" font-size="17" font-family="Liberation Serif, serif" font-weight="bold" fill="#3a3a38" textLength="14.6" lengthAdjust="spacingAndGlyphs">“ ”</text><text x="5.4" y="12.8" font-size="17" font-family="Liberation Serif, serif" font-weight="bold" fill="#3a3a38">;</text></svg>
<span class="t" style="left:37px;letter-spacing:-0.151px">14. Get word by delimiters...<i class="ul" style="left:41px;top:17px;width:9px"></i></span>
</div>
<div class="mi" style="left:2px;top:374px;width:336px">
<svg class="ic" style="left:6px;top:3px" width="16" height="16" viewBox="0 0 16 16" font-family="Liberation Sans, sans-serif" ><text x="3.4" y="13.2" font-size="12.8" fill="#222" textLength="11.2" lengthAdjust="spacingAndGlyphs" >W</text><path d="M2.2 8.3H16" stroke="#222" stroke-width="1"/></svg>
<span class="t" style="left:37px;letter-spacing:-0.174px">15. Remove words from text...<i class="ul" style="left:100px;top:17px;width:4px"></i></span>
</div>
<div class="sep" style="left:32px;top:398px;width:306px"></div>
<div class="mi" style="left:2px;top:400px;width:336px">
<svg class="ic" style="left:6px;top:3px" width="16" height="16" viewBox="0 0 16 16" font-family="Liberation Sans, sans-serif" ><text x="1.5" y="13.2" font-size="15" textLength="15" lengthAdjust="spacingAndGlyphs"><tspan fill="#d9261c">ab</tspan><tspan fill="#333">c</tspan></text></svg>
<span class="t" style="left:37px;letter-spacing:-0.093px">16. Mark latin letters<i class="ul" style="left:20px;top:17px;width:10px"></i></span>
</div>
<div class="mi" style="left:2px;top:422px;width:336px">
<svg class="ic" style="left:6px;top:3px" width="16" height="16" viewBox="0 0 16 16" font-family="Liberation Sans, sans-serif" ><text x="1.5" y="13.2" font-size="15" textLength="15" lengthAdjust="spacingAndGlyphs"><tspan fill="#333">ab</tspan><tspan fill="#d9261c">c</tspan></text></svg>
<span class="t" style="left:37px;letter-spacing:-0.068px">17. Mark cyrillic letters<i class="ul" style="left:49px;top:17px;width:6px"></i></span>
</div>
<div class="mi hl" style="left:2px;top:444px;width:336px">
<span class="t" style="left:37px;letter-spacing:-0.132px">Convert similar letters<i class="ul" style="left:44px;top:17px;width:6px"></i></span>
<i class="arr" style="left:325px;top:8.8px"></i>
</div>
<div class="sep" style="left:32px;top:468px;width:306px"></div>
<div class="mi" style="left:2px;top:470px;width:336px">
<svg class="ic" style="left:6px;top:3px" width="16" height="16" viewBox="0 0 16 16" font-family="Liberation Sans, sans-serif" ><path d="M2 4.5H16.4M12.6 0.8L16.6 4.5L12.6 8.2M16 11.5H1.6M5.4 7.8L1.4 11.5L5.4 15.2" fill="none" stroke="#444" stroke-width="1"/></svg>
<span class="t" style="left:37px;letter-spacing:-0.398px">18. Reverse text<i class="ul" style="left:63px;top:17px;width:3px"></i></span>
</div>
<div class="sep" style="left:32px;top:494px;width:306px"></div>
<div class="mi" style="left:2px;top:496px;width:336px">
<svg class="ic" style="left:6px;top:3px" width="16" height="16" viewBox="0 0 16 16" font-family="Liberation Sans, sans-serif" ><text x="4.6" y="13" font-size="15.4" font-weight="bold" fill="#000" textLength="7.6" lengthAdjust="spacingAndGlyphs">¶</text></svg>
<span class="t" style="left:37px;letter-spacing:-0.003px">19. Show/Hide non-printable chars<i class="ul" style="left:135px;top:17px;width:7px"></i></span>
<i class="arr" style="left:325px;top:8.8px"></i>
</div>
<div class="mi" style="left:2px;top:518px;width:336px">
<svg class="ic" style="left:6px;top:3px" width="16" height="16" viewBox="0 0 16 16" font-family="Liberation Sans, sans-serif" ><text x="2.6" y="12.2" font-size="11.4" fill="#111" textLength="12.6" lengthAdjust="spacingAndGlyphs" font-weight="bold">UNi</text></svg>
<span class="t" style="left:37px;letter-spacing:-0.108px">20. Show Unicode for each char in text<i class="ul" style="left:52px;top:17px;width:9px"></i></span>
</div>
<div class="mi" style="left:2px;top:540px;width:336px">
<svg class="ic" style="left:6px;top:3px" width="16" height="16" viewBox="0 0 16 16" font-family="Liberation Sans, sans-serif" ><text x="2" y="10.4" font-size="15" font-family="Liberation Serif, serif" font-weight="bold" fill="#444" textLength="13.6" lengthAdjust="spacingAndGlyphs">“ ”</text><path d="M8.5 6.2V14.8M4.2 10.5H12.8M5.5 7.5L11.5 13.5M11.5 7.5L5.5 13.5" stroke="#2a2a2a" stroke-width="1" fill="none"/></svg>
<span class="t" style="left:37px;letter-spacing:-0.141px">21. Hide/Replace private data<i class="ul" style="left:19px;top:17px;width:9px"></i></span>
<i class="arr" style="left:325px;top:8.8px"></i>
</div>
<div class="sep" style="left:32px;top:564px;width:306px"></div>
<div class="mi" style="left:2px;top:566px;width:336px">
<svg class="ic" style="left:6px;top:3px" width="16" height="16" viewBox="0 0 16 16" font-family="Liberation Sans, sans-serif" ><rect x="9" y="4.4" width="8" height="12" fill="#dcdcdc"/><path d="M11.4 8.6H15.6M13.4 7.6V8.6M12 8.6C12.4 10.6 14 12.4 15.6 13M15 8.6C14.6 10.6 13 12.4 11.4 13" stroke="#5a8fd0" stroke-width="0.8" fill="none"/><path d="M1 0.4H9.4L11 13.4H1Z" fill="#4a86e8"/><path d="M9.2 13.4H11L9.6 15.8Z" fill="#2a56b0"/><text x="2.6" y="9.8" font-size="8.4" font-weight="bold" fill="#fff">G</text></svg>
<span class="t" style="left:37px;letter-spacing:-0.331px">22. Google Translate...<i class="ul" style="left:47px;top:17px;width:2px"></i></span>
</div>
</div>
<div class="menu" style="left:741px;top:509px;width:260px;height:72px">
<div class="gut" style="width:28px"></div>
<div class="mi hl" style="left:2px;top:2px;width:254px">
<span class="t" style="left:37px;letter-spacing:0.02px">Cyrillic into Latin<i class="ul" style="left:0px;top:17px;width:9px"></i></span>
</div>
<div class="mi" style="left:2px;top:24px;width:254px">
<span class="t" style="left:37px;letter-spacing:0.02px">Latin into Cyrillic<i class="ul" style="left:0px;top:17px;width:7px"></i></span>
</div>
<div class="mi" style="left:2px;top:46px;width:254px">
<span class="t" style="left:37px;letter-spacing:-0.091px">Accented into plain (e.g., ã &gt; a, é &gt; e)<i class="ul" style="left:0px;top:17px;width:8px"></i></span>
</div>
</div>
</div></body></html>
